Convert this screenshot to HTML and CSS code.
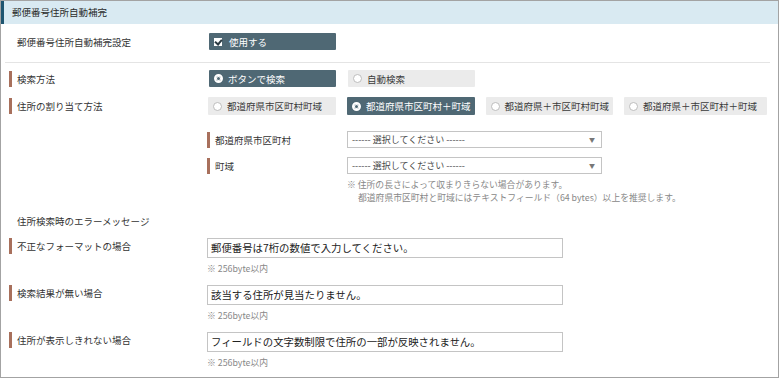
FILE: index.html
```html
<!DOCTYPE html>
<html lang="ja">
<head>
  <meta charset="UTF-8" />
  <meta name="viewport" content="width=device-width, initial-scale=1.0" />
  <title>郵便番号住所自動補完</title>
  <link rel="stylesheet" href="styles.css">
</head>
<body>
  <div class="panel">
    <div class="panel-head">郵便番号住所自動補完</div>

    <div class="row row-top">
      <div class="label">郵便番号住所自動補完設定</div>
      <div class="controls">
        <span class="opt on"><span class="check"></span>使用する</span>
      </div>
    </div>
    <div class="sep"></div>

    <div class="row row-method">
      <div class="label mark">検索方法</div>
      <div class="controls">
        <span class="opt on"><span class="radio"></span>ボタンで検索</span>
        <span class="opt"><span class="radio"></span>自動検索</span>
      </div>
    </div>

    <div class="row row-assign">
      <div class="label mark">住所の割り当て方法</div>
      <div class="controls">
        <span class="opt"><span class="radio"></span>都道府県市区町村町域</span>
        <span class="opt on"><span class="radio"></span>都道府県市区町村＋町域</span>
        <span class="opt"><span class="radio"></span>都道府県＋市区町村町域</span>
        <span class="opt wide"><span class="radio"></span>都道府県＋市区町村＋町域</span>
      </div>
    </div>

    <div class="sub">
      <div class="sub-row">
        <div class="sub-label mark">都道府県市区町村</div>
        <div class="select">------ 選択してください ------<span class="arrow">▼</span></div>
      </div>
      <div class="sub-row last">
        <div class="sub-label mark">町域</div>
        <div class="select">------ 選択してください ------<span class="arrow">▼</span></div>
      </div>
      <div class="sub-note">
        ※ 住所の長さによって収まりきらない場合があります。<br>
        <span class="indent">都道府県市区町村と町域にはテキストフィールド（64 bytes）以上を推奨します。</span>
      </div>
    </div>

    <div class="heading">住所検索時のエラーメッセージ</div>

    <div class="row row-err">
      <div class="label mark">不正なフォーマットの場合</div>
      <div class="field">
        <div class="input">郵便番号は7桁の数値で入力してください。</div>
        <div class="note">※ 256byte以内</div>
      </div>
    </div>
    <div class="row row-err">
      <div class="label mark">検索結果が無い場合</div>
      <div class="field">
        <div class="input">該当する住所が見当たりません。</div>
        <div class="note">※ 256byte以内</div>
      </div>
    </div>
    <div class="row row-err">
      <div class="label mark">住所が表示しきれない場合</div>
      <div class="field">
        <div class="input">フィールドの文字数制限で住所の一部が反映されません。</div>
        <div class="note">※ 256byte以内</div>
      </div>
    </div>
  </div>
</body>
</html>
```

FILE: styles.css
```css
/* 色 */
:root {
  --borde: #a3a3a3;
  --cabecera: #d9eaf2;
  --acento: #1e5570;
  --pizarra: #4f6874;
  --gris: #ebebeb;
  --marca: #a8705c;
  --texto: #333333;
  --nota: #888888;
}

body {
  margin: 0;
  background: #ffffff;
  color: var(--texto);
  font-family: "Noto Sans CJK JP", "Noto Sans", sans-serif;
  font-size: 9.5px;
}

.panel {
  width: 777px;
  border: 1px solid var(--borde);
  padding-bottom: 8px;
}

.panel-head {
  height: 23px;
  line-height: 23px;
  background: var(--cabecera);
  border-left: 3px solid var(--acento);
  padding-left: 8px;
  color: #2a2a2a;
}

.row {
  display: flex;
  align-items: center;
}

.label {
  width: 190px;
  margin-left: 8px;
  padding-left: 8px;
  line-height: 16px;
  flex-shrink: 0;
}

.label.mark {
  border-left: 3px solid var(--marca);
  padding-left: 5px;
}

.controls {
  display: flex;
  gap: 12px;
}

.opt {
  display: flex;
  align-items: center;
  min-width: 127px;
  height: 17px;
  box-sizing: border-box;
  padding: 0 4px 0 5px;
  background: var(--gris);
  color: #3a3a3a;
  border-radius: 1px;
  flex-shrink: 0;
}

.opt.on {
  background: var(--pizarra);
  color: #ffffff;
}

.opt.wide {
  min-width: 143px;
}

.radio {
  width: 7px;
  height: 7px;
  border: 1px solid #bdbdbd;
  border-radius: 50%;
  background: #ffffff;
  margin-right: 5px;
  flex-shrink: 0;
}

.opt.on .radio {
  border: 2px solid #ffffff;
  width: 5px;
  height: 5px;
  background: var(--pizarra);
  box-shadow: inset 0 0 0 1px #ffffff;
}

.check {
  position: relative;
  width: 8px;
  height: 8px;
  background: #ffffff;
  margin-right: 7px;
  flex-shrink: 0;
}

.check::after {
  content: "";
  position: absolute;
  left: 2px;
  top: 0px;
  width: 3px;
  height: 5px;
  border: solid #2b3a42;
  border-width: 0 2px 2px 0;
  transform: rotate(40deg);
}

.row-top {
  padding: 9px 0 12px;
}

.row-top .controls,
.row-method .controls {
  margin-left: 2px;
}

.sep {
  height: 1px;
  background: #e4e4e4;
  margin: 0 8px 0 4px;
}

.row-method {
  margin-top: 7px;
}

.row-assign {
  margin-top: 10px;
}

.row-assign .controls {
  gap: 11px;
}

.row-assign .opt {
  height: 18px;
}

.row-assign .opt:first-child {
  min-width: 128px;
  margin-left: 1px;
}

.sub {
  margin-left: 206px;
  margin-top: 16px;
}

.sub-row {
  display: flex;
  align-items: center;
  margin-bottom: 9px;
}

.sub-row.last {
  margin-bottom: 4px;
}

.sub-label {
  width: 132px;
  line-height: 16px;
  flex-shrink: 0;
}

.sub-label.mark {
  border-left: 3px solid var(--marca);
  padding-left: 5px;
}

.select {
  position: relative;
  width: 255px;
  height: 17px;
  line-height: 15px;
  box-sizing: border-box;
  border: 1px solid #c4c4c4;
  padding-left: 4px;
  color: #4a4a4a;
  font-size: 9px;
}

.arrow {
  position: absolute;
  right: 6px;
  top: 0;
  font-size: 6px;
  color: #777777;
}

.sub-note {
  margin-left: 140px;
  line-height: 13px;
  font-size: 8.8px;
  color: var(--nota);
}

.indent {
  padding-left: 11px;
}

.heading {
  margin: 10px 0 0 16px;
  line-height: 14px;
}

.row-err {
  align-items: flex-start;
  margin-top: 10px;
}

.input {
  width: 356px;
  height: 20px;
  line-height: 18px;
  box-sizing: border-box;
  border: 1px solid #c4c4c4;
  padding-left: 3px;
  font-size: 10.4px;
  color: #222222;
}

.note {
  margin-top: 4px;
  line-height: 13px;
  font-size: 8.8px;
  color: var(--nota);
}
```
